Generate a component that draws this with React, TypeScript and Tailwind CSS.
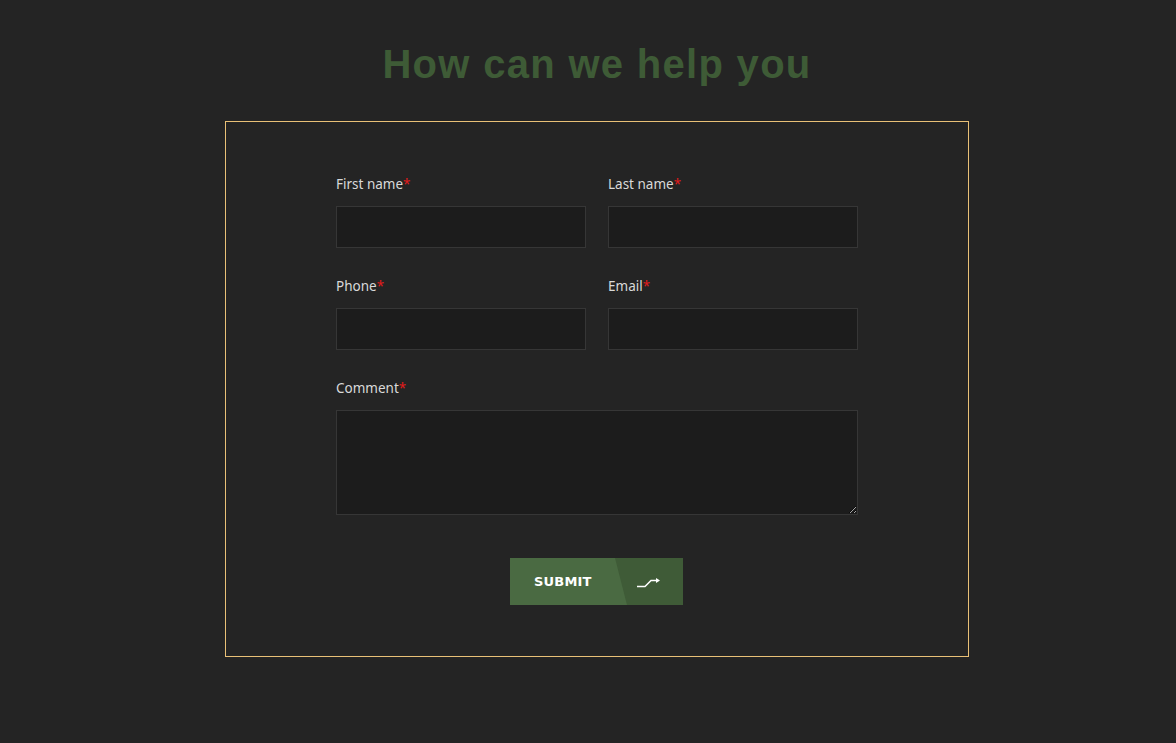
import React from "react";

const labelCls =
  "text-[13.5px] leading-5 text-[#d9d9d9] font-['Noto_Sans','Lato',sans-serif]";

function Field({ label }: { label: string }) {
  return (
    <div className="flex flex-col">
      <label className={labelCls}>
        {label}
        <span className="text-[#e21b1b]">*</span>
      </label>
      <input className="mt-3 h-[42px] w-full bg-[#1c1c1c] border border-[#363636] outline-none" />
    </div>
  );
}

export default function App() {
  return (
    <div className="min-h-[743px] w-full bg-[#242424] pl-[18px] pt-[40px] pb-[80px] flex flex-col items-center">
      <h1 className="text-[40px] leading-[48px] font-bold text-[#3e5b36] font-['Liberation_Sans',Arial,sans-serif] tracking-[1.3px]">
        How can we help you
      </h1>
      <div className="mt-[33px] w-[744px] border border-[#e9c077] pt-[52px] pb-[51px]">
        <div className="ml-[110px] w-[522px]">
          <div className="grid grid-cols-2 gap-x-[22px] gap-y-[28px]">
            <Field label="First name" />
            <Field label="Last name" />
            <Field label="Phone" />
            <Field label="Email" />
          </div>
          <div className="mt-[28px] flex flex-col">
            <label className={labelCls}>
              Comment<span className="text-[#e21b1b]">*</span>
            </label>
            <textarea className="mt-3 h-[105px] w-full bg-[#1c1c1c] border border-[#363636] outline-none block" />
          </div>
          <div className="mt-[43px] flex pl-[174px]">
            <button className="relative h-[47px] w-[173px] bg-[#4a6a42] flex items-center">
              <div className="absolute inset-0 bg-[#3f5b37] [clip-path:polygon(105px_0,100%_0,100%_100%,117px_100%)]" />
              <span className="relative pl-[24px] text-[13px] font-bold text-white tracking-[0.2px] font-['DejaVu_Sans',sans-serif]">
                SUBMIT
              </span>
              <svg
                className="absolute left-[126px] top-[20px]"
                width="25"
                height="10"
                viewBox="0 0 25 10"
                fill="none"
              >
                <polyline points="1,8.5 9,8.5 15,2.5 20,2.5" stroke="white" strokeWidth="1.5" />
                <polygon points="20,0 24,2.5 20,5" fill="white" />
              </svg>
            </button>
          </div>
        </div>
      </div>
    </div>
  );
}
